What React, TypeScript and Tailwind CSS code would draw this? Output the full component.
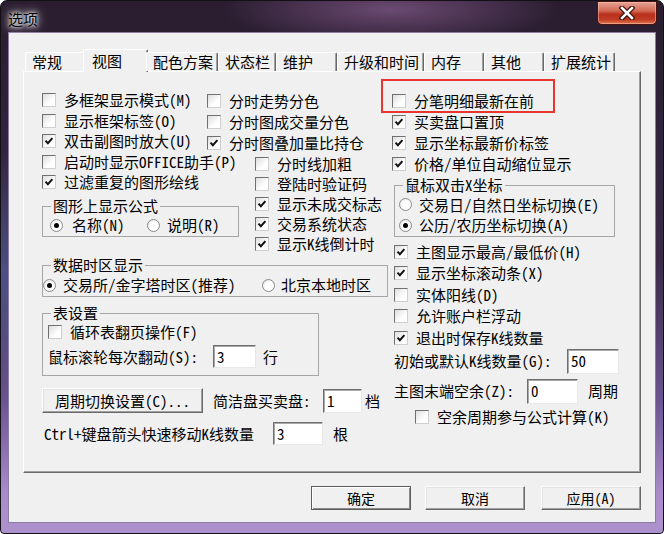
import type { ReactNode } from 'react';

// Windows 7 style "选项" dialog, 视图 tab

function Box({ checked = false }: { checked?: boolean }) {
  return (
    <span className="flex h-[14px] w-[14px] shrink-0 items-center justify-center border border-t-[#707070] border-l-[#707070] border-r-[#cfcfcf] border-b-[#cfcfcf] bg-[linear-gradient(135deg,#dedede,#ffffff_65%)]">
      {checked && (
        <svg width="10" height="10" viewBox="0 0 10 10">
          <path d="M1.5 4.6 L3.9 7.2 L8.4 2.2" stroke="#111" strokeWidth="2" fill="none" />
        </svg>
      )}
    </span>
  );
}

function Check({ label, on = false, className = '' }: { label: string; on?: boolean; className?: string }) {
  return (
    <div className={`flex items-center whitespace-nowrap ${className}`}>
      <Box checked={on} />
      <span className="ml-[8px]">{label}</span>
    </div>
  );
}

function Dot({ on = false }: { on?: boolean }) {
  return (
    <span className="flex h-[13px] w-[13px] shrink-0 items-center justify-center rounded-full border border-[#8a8a8a] bg-[radial-gradient(circle_at_60%_60%,#ffffff_45%,#d8d8d8)]">
      {on && <span className="h-[5px] w-[5px] rounded-full bg-black" />}
    </span>
  );
}

function Field({ value, className = '' }: { value: string; className?: string }) {
  return (
    <div
      className={`flex items-center border border-t-[#6e6e6e] border-l-[#6e6e6e] border-r-[#e8e8e8] border-b-[#e8e8e8] bg-white pl-[3px] shadow-[inset_1px_1px_0_#a9a9a9] ${className}`}
    >
      {value}
    </div>
  );
}

function Group({ title, className = '', children }: { title: string; className?: string; children: ReactNode }) {
  return (
    <fieldset className={`border border-[#a6a6a6] ${className}`}>
      <legend className="ml-[8px] px-[2px] leading-[16px]">{title}</legend>
      {children}
    </fieldset>
  );
}

function Btn({ children, className = '', primary = false }: { children: ReactNode; className?: string; primary?: boolean }) {
  return (
    <div
      className={`flex items-center justify-center whitespace-nowrap bg-[#f0f0f0] ${
        primary
          ? 'border border-[#5c5c5c] shadow-[inset_1px_1px_0_#fff,inset_-1px_-1px_0_#8a8a8a]'
          : 'border border-t-[#fdfdfd] border-l-[#fdfdfd] border-r-[#696969] border-b-[#696969] shadow-[inset_-1px_-1px_0_#a0a0a0,inset_1px_1px_0_#e3e3e3]'
      } ${className}`}
    >
      {children}
    </div>
  );
}

const tabs = [
  { t: '常规', w: 'w-[60px]' },
  { t: '视图', w: 'w-[61px]', on: true },
  { t: '配色方案', w: 'w-[72px]' },
  { t: '状态栏', w: 'w-[58px]' },
  { t: '维护', w: 'w-[61px]' },
  { t: '升级和时间', w: 'w-[87px]' },
  { t: '内存', w: 'w-[60px]' },
  { t: '其他', w: 'w-[60px]' },
  { t: '扩展统计', w: 'w-[71px]' },
];

export default function App() {
  return (
    <div className="relative h-[534px] w-[664px] overflow-hidden rounded-t-[7px] rounded-b-[4px] border border-[#121014] bg-[radial-gradient(ellipse_170px_36px_at_390px_8px,rgba(160,110,170,0.55),transparent),radial-gradient(ellipse_60px_120px_at_0px_270px,rgba(90,120,190,0.5),transparent),linear-gradient(180deg,#2a1d2f_0px,#30223a_120px,#3a2a48_260px,#6a5490_400px,#a88ac8_490px,#ae92cd_534px)] font-['Noto_Sans_Mono_CJK_SC','Noto_Sans_CJK_SC',sans-serif] text-[15px] leading-[20px] text-black">
      {/* title bar */}
      <div className="flex h-[31px] items-start justify-between">
        <span className="ml-[7px] mt-[8px] leading-[20px] [text-shadow:0_0_6px_#fff,0_0_12px_#fff,0_0_3px_#fff]">选项</span>
        <div className="mr-[6px] flex h-[24px] w-[60px] items-center justify-center rounded-b-[5px] border border-[#4a120c] bg-[linear-gradient(180deg,#e8a394_0%,#d26a55_40%,#b8301d_55%,#c23b24_80%,#e07a4c_100%)] shadow-[inset_0_0_0_1px_rgba(255,200,190,0.5)]">
          <svg width="16" height="14" viewBox="0 0 16 14">
            <path d="M3 2 L13 12 M13 2 L3 12" stroke="#3b0d08" strokeWidth="5" strokeLinecap="square" />
            <path d="M3 2 L13 12 M13 2 L3 12" stroke="#ffffff" strokeWidth="2.6" strokeLinecap="square" />
          </svg>
        </div>
      </div>

      {/* client area */}
      <div className="mx-[7px] h-[491px] border border-[#8c7ea0] bg-[#f0f0f0]">
        {/* tab strip */}
        <div className="relative z-10 mt-[16px] flex h-[22px] items-end pl-[16px]">
          {tabs.map((tab) =>
            tab.on ? (
              <div
                key={tab.t}
                className="-mx-[2px] mb-[-1px] flex h-[23px] w-[65px] items-center rounded-t-[2px] border-t border-l border-r border-t-white border-l-white border-r-[#696969] bg-[#f0f0f0] pl-[8px] shadow-[inset_-1px_0_0_#a0a0a0]"
              >
                {tab.t}
              </div>
            ) : (
              <div
                key={tab.t}
                className={`flex h-[19px] items-center rounded-t-[2px] border-t border-l border-r border-t-white border-l-white border-r-[#696969] bg-[#f0f0f0] pl-[6px] shadow-[inset_-1px_0_0_#a0a0a0] ${tab.w}`}
              >
                {tab.t}
              </div>
            ),
          )}
        </div>

        {/* tab panel */}
        <div className="ml-[14px] flex h-[402px] w-[618px] border border-t-white border-l-white border-r-[#696969] border-b-[#696969] pl-[18px] pt-[18px] shadow-[inset_-1px_-1px_0_#a0a0a0]">
          {/* left side */}
          <div className="flex w-[350px] flex-col">
            <div className="flex">
              <div className="flex w-[165px] flex-col">
                <Check className="h-[20.5px]" label="多框架显示模式(M)" />
                <Check className="h-[20.5px]" label="显示框架标签(O)" />
                <Check className="h-[20.5px]" label="双击副图时放大(U)" on />
                <Check className="h-[20.5px]" label="启动时显示OFFICE助手(P)" />
                <Check className="h-[20.5px]" label="过滤重复的图形绘线" on />
                <Group title="图形上显示公式" className="mt-[5.5px] w-[197px] pb-[1px]">
                  <div className="mt-[1px] flex h-[20px] items-center pl-[7px]">
                    <div className="flex w-[97px] items-center">
                      <Dot on />
                      <span className="ml-[9px]">名称(N)</span>
                    </div>
                    <Dot />
                    <span className="ml-[7px]">说明(R)</span>
                  </div>
                </Group>
              </div>
              <div className="flex flex-col">
                <Check className="h-[21px]" label="分时走势分色" />
                <Check className="h-[21px]" label="分时图成交量分色" />
                <Check className="h-[21px]" label="分时图叠加量比持仓" on />
                <div className="ml-[48px] mt-[1px] flex flex-col">
                  <Check className="h-[20px]" label="分时线加粗" />
                  <Check className="h-[20px]" label="登陆时验证码" />
                  <Check className="h-[20px]" label="显示未成交标志" on />
                  <Check className="h-[20px]" label="交易系统状态" on />
                  <Check className="h-[20px]" label="显示K线倒计时" on />
                </div>
              </div>
            </div>

            <Group title="数据时区显示" className="mt-[3px] w-[346px] pb-[1px]">
              <div className="mt-[2px] flex h-[20px] items-center">
                <div className="flex w-[219px] items-center">
                  <Dot on />
                  <span className="ml-[7px] whitespace-nowrap">交易所/金字塔时区(推荐)</span>
                </div>
                <Dot />
                <span className="ml-[6px] whitespace-nowrap">北京本地时区</span>
              </div>
            </Group>

            <Group title="表设置" className="mt-[8px] w-[277px] pb-[7px]">
              <Check className="mt-[1px] h-[20px] pl-[5px]" label="循环表翻页操作(F)" />
              <div className="mt-[3px] flex h-[23px] items-center pl-[5px]">
                <span className="w-[165px] whitespace-nowrap">鼠标滚轮每次翻动(S):</span>
                <Field value="3" className="h-[23px] w-[43px]" />
                <span className="ml-[7px]">行</span>
              </div>
            </Group>

            <div className="mt-[12px] flex items-center">
              <Btn className="h-[25px] w-[161px]">周期切换设置(C)...</Btn>
              <span className="ml-[10px] w-[110px] whitespace-nowrap">简洁盘买卖盘:</span>
              <Field value="1" className="h-[24px] w-[39px]" />
              <span className="ml-[3px]">档</span>
            </div>

            <div className="mt-[9px] flex h-[23px] items-center">
              <span className="ml-[2px] w-[229px] whitespace-nowrap">Ctrl+键盘箭头快速移动K线数量</span>
              <Field value="3" className="h-[23px] w-[50px]" />
              <span className="ml-[10px]">根</span>
            </div>
          </div>

          {/* right side */}
          <div className="flex flex-col">
            <Check className="h-[21px]" label="分笔明细最新在前" />
            <Check className="h-[21px]" label="买卖盘口置顶" on />
            <Check className="h-[21px]" label="显示坐标最新价标签" on />
            <Check className="h-[21px]" label="价格/单位自动缩位显示" on />

            <Group title="鼠标双击X坐标" className="ml-[2px] mt-[3px] w-[221px] pb-[1px]">
              <div className="mt-[1px] flex h-[21px] items-center pl-[4px]">
                <Dot />
                <span className="ml-[7px] whitespace-nowrap">交易日/自然日坐标切换(E)</span>
              </div>
              <div className="flex h-[20px] items-center pl-[4px]">
                <Dot on />
                <span className="ml-[7px] whitespace-nowrap">公历/农历坐标切换(A)</span>
              </div>
            </Group>

            <div className="ml-[2px] mt-[4px] flex flex-col">
              <Check className="h-[21.5px]" label="主图显示最高/最低价(H)" on />
              <Check className="h-[21.5px]" label="显示坐标滚动条(X)" on />
              <Check className="h-[21.5px]" label="实体阳线(D)" />
              <Check className="h-[21.5px]" label="允许账户栏浮动" />
              <Check className="h-[21.5px]" label="退出时保存K线数量" on />
            </div>

            <div className="ml-[2px] flex h-[25px] items-center">
              <span className="w-[173px] whitespace-nowrap">初始或默认K线数量(G):</span>
              <Field value="50" className="h-[25px] w-[52px]" />
            </div>

            <div className="ml-[2px] mt-[5px] flex h-[25px] items-center">
              <span className="w-[133px] whitespace-nowrap">主图末端空余(Z):</span>
              <Field value="0" className="h-[25px] w-[51px]" />
              <span className="ml-[10px]">周期</span>
            </div>

            <Check className="ml-[23px] mt-[3px] h-[20px]" label="空余周期参与公式计算(K)" />
          </div>
        </div>

        {/* dialog buttons */}
        <div className="mt-[13px] flex justify-end pr-[14px] text-[14px]">
          <Btn primary className="h-[24px] w-[100px]">确定</Btn>
          <Btn className="ml-[14px] h-[24px] w-[100px]">取消</Btn>
          <Btn className="ml-[16px] h-[24px] w-[100px]">应用(A)</Btn>
        </div>
      </div>

      {/* red highlight annotation */}
      <div className="absolute left-[380px] top-[78px] h-[34px] w-[174px] border-2 border-[#e8352d]" />
    </div>
  );
}
